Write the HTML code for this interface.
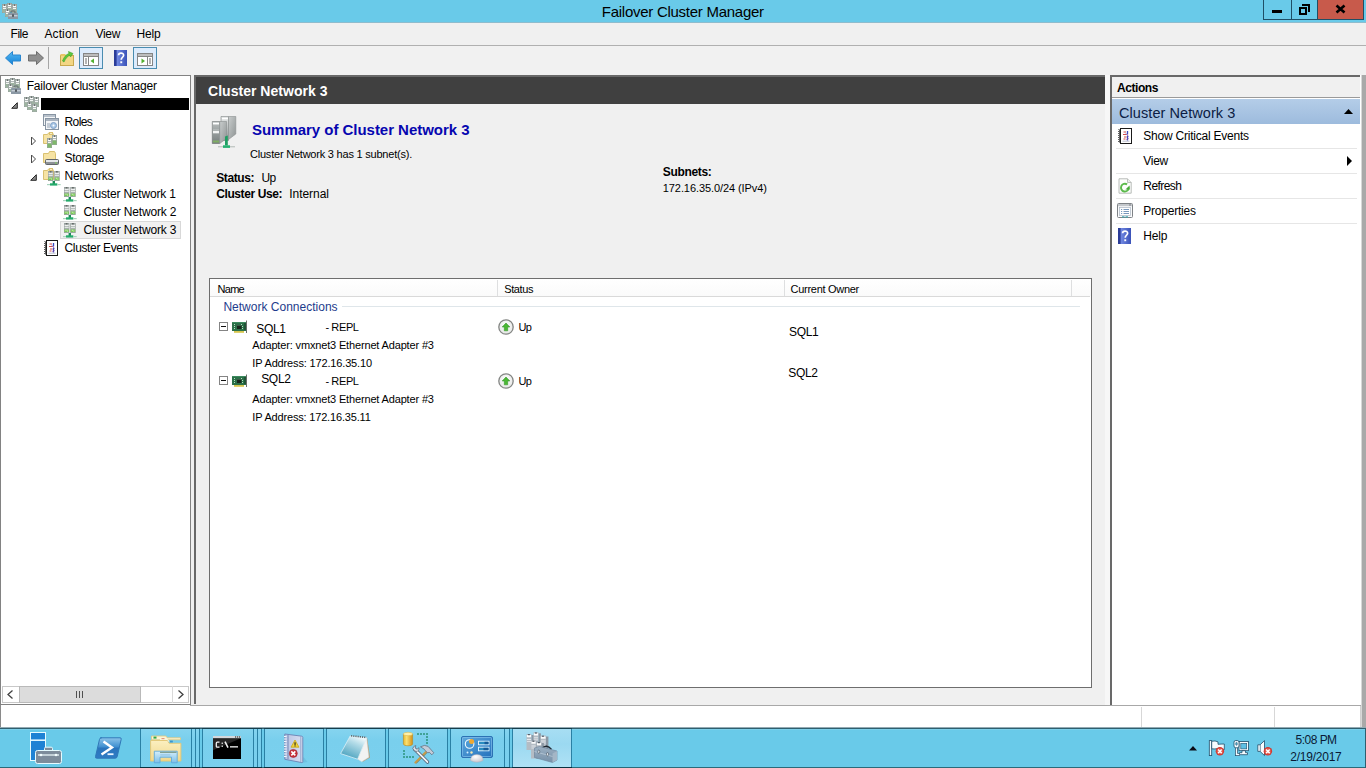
<!DOCTYPE html>
<html>
<head>
<meta charset="utf-8">
<title>Failover Cluster Manager</title>
<style>
*{box-sizing:border-box;margin:0;padding:0}
html,body{width:1366px;height:768px;overflow:hidden;background:#f0f0f0;font-family:"Liberation Sans",sans-serif;font-size:12px;color:#000}
.a,.x,svg{position:absolute}
.x{white-space:nowrap}
svg{overflow:visible}
.vl{position:absolute;top:728px;width:1px;height:39px;background:#2b7896}
.sep{position:absolute;left:1116px;width:241px;height:1px;background:#e6e6e6}
</style>
</head>
<body>
<div class="a" style="left:0px;top:0px;width:1366px;height:22px;background:#69cae9;"></div>
<div class="a" style="left:1263px;top:0px;width:29px;height:20px;background:#69cae9;border:1px solid #1f4f66;border-top:0"></div>
<div class="a" style="left:1291px;top:0px;width:27px;height:20px;background:#69cae9;border:1px solid #1f4f66;border-top:0"></div>
<div class="a" style="left:1317px;top:0px;width:47px;height:20px;background:#c85a4b;border:1px solid #1f4f66;border-top:0"></div>
<div class="a" style="left:1272px;top:10px;width:10px;height:3px;background:#000;"></div>
<svg style="left:1298px;top:3px" width="12" height="12"><path d="M4 2h7v7" fill="none" stroke="#000" stroke-width="2"/><rect x="2" y="5" width="6" height="6" fill="none" stroke="#000" stroke-width="2"/></svg>
<svg style="left:1335px;top:4px" width="11" height="10"><path d="M1.5 1.5L9.5 8.5M9.5 1.5L1.5 8.5" stroke="#000" stroke-width="2.6"/></svg>
<div class="a" style="left:0px;top:22px;width:1366px;height:23px;background:#f0f0f0;"></div>
<div class="a" style="left:0px;top:22px;width:1366px;height:1px;background:#8fbccd;"></div>
<div class="a" style="left:0px;top:45px;width:1366px;height:1px;background:#b0b0b0;"></div>
<div class="a" style="left:0px;top:46px;width:1366px;height:29px;background:#f1f1f1;"></div>
<div class="a" style="left:0px;top:75px;width:191px;height:630px;background:#fff;border:1px solid #828282"></div>
<div class="a" style="left:194px;top:75px;width:917px;height:630px;background:#f0f0f0;"></div>
<div class="a" style="left:194px;top:75px;width:912px;height:2px;background:#696969;"></div>
<div class="a" style="left:194px;top:75px;width:2px;height:629px;background:#696969;"></div>
<div class="a" style="left:196px;top:77px;width:909px;height:27px;background:#404040;"></div>
<div class="a" style="left:1105px;top:75px;width:5px;height:630px;background:#f7f7f7;"></div>
<div class="a" style="left:209px;top:278px;width:883px;height:410px;background:#fff;border:1px solid #6e6e6e"></div>
<div class="a" style="left:210px;top:279px;width:881px;height:17px;background:linear-gradient(#fff,#fafafa);"></div>
<div class="a" style="left:210px;top:296px;width:880px;height:1px;background:#d9d9d9;"></div>
<div class="a" style="left:497px;top:280px;width:1px;height:16px;background:#dedfe0;"></div>
<div class="a" style="left:784px;top:280px;width:1px;height:16px;background:#dedfe0;"></div>
<div class="a" style="left:1071px;top:280px;width:1px;height:16px;background:#dedfe0;"></div>
<div class="a" style="left:342px;top:306px;width:738px;height:1px;background:#dfe6ea;"></div>
<div class="a" style="left:1110px;top:75px;width:252px;height:630px;background:#fff;"></div>
<div class="a" style="left:1110px;top:75px;width:250px;height:2px;background:#696969;"></div>
<div class="a" style="left:1110px;top:75px;width:2px;height:630px;background:#696969;"></div>
<div class="a" style="left:1112px;top:77px;width:248px;height:20px;background:#f0f0f0;"></div>
<div class="a" style="left:1112px;top:97px;width:248px;height:1px;background:#9a9a9a;"></div>
<div class="a" style="left:1112px;top:99px;width:248px;height:25px;background:linear-gradient(#b4cde8,#9dbbdd);"></div>
<div class="sep" style="top:148px"></div>
<div class="sep" style="top:173px"></div>
<div class="sep" style="top:198px"></div>
<div class="sep" style="top:223px"></div>
<svg style="left:1344px;top:109px" width="9" height="5"><path d="M0 5L4.5 0L9 5z" fill="#000"/></svg>
<svg style="left:1347px;top:156px" width="6" height="10"><path d="M0 0L5 5L0 10z" fill="#000"/></svg>
<div class="a" style="left:0px;top:705px;width:1366px;height:22px;background:#fff;"></div>
<div class="a" style="left:190px;top:705px;width:1176px;height:1px;background:#a8a8a8;"></div>
<div class="a" style="left:1141px;top:707px;width:1px;height:20px;background:#d7d7d7;"></div>
<div class="a" style="left:1274px;top:707px;width:1px;height:20px;background:#d7d7d7;"></div>
<div class="a" style="left:1360px;top:706px;width:1px;height:21px;background:#d0d0d0;"></div>
<div class="a" style="left:1362px;top:75px;width:4px;height:652px;background:#a9a9a9;"></div>
<div class="a" style="left:1361px;top:75px;width:1px;height:652px;background:#d8d8d8;"></div>
<div class="a" style="left:0px;top:705px;width:1px;height:22px;background:#8a8a8a;"></div>
<div class="a" style="left:0px;top:727px;width:1366px;height:41px;background:#69cae9;"></div>
<div class="a" style="left:0px;top:729px;width:1366px;height:1px;background:#7ccfe9;"></div>
<div class="a" style="left:0px;top:727px;width:1366px;height:1px;background:#93aab3;"></div>
<div class="a" style="left:0px;top:728px;width:1366px;height:1px;background:#2f5f6f;"></div>
<div class="a" style="left:0px;top:767px;width:1366px;height:1px;background:#2a6a7a;"></div>
<div class="a" style="left:1365px;top:728px;width:1px;height:40px;background:#2f5f6f;"></div>
<div class="a" style="left:140px;top:728px;width:60px;height:40px;background:linear-gradient(#86d4ef,#79cfed 30%,#7ad0ee);"></div>
<div class="a" style="left:140px;top:728px;width:60px;height:1px;background:#163e4c;"></div>
<div class="a" style="left:140px;top:767px;width:60px;height:1px;background:#0a3240;"></div>
<div class="a" style="left:140px;top:729px;width:1px;height:38px;background:#2a80a4;"></div>
<div class="a" style="left:191px;top:729px;width:1px;height:38px;background:#2a80a4;"></div>
<div class="a" style="left:195px;top:729px;width:1px;height:38px;background:#2a80a4;"></div>
<div class="a" style="left:199px;top:729px;width:1px;height:38px;background:#2a80a4;"></div>
<div class="a" style="left:202px;top:728px;width:60px;height:40px;background:linear-gradient(#86d4ef,#79cfed 30%,#7ad0ee);"></div>
<div class="a" style="left:202px;top:728px;width:60px;height:1px;background:#163e4c;"></div>
<div class="a" style="left:202px;top:767px;width:60px;height:1px;background:#0a3240;"></div>
<div class="a" style="left:202px;top:729px;width:1px;height:38px;background:#2a80a4;"></div>
<div class="a" style="left:253px;top:729px;width:1px;height:38px;background:#2a80a4;"></div>
<div class="a" style="left:257px;top:729px;width:1px;height:38px;background:#2a80a4;"></div>
<div class="a" style="left:261px;top:729px;width:1px;height:38px;background:#2a80a4;"></div>
<div class="a" style="left:264px;top:728px;width:60px;height:40px;background:linear-gradient(#86d4ef,#79cfed 30%,#7ad0ee);"></div>
<div class="a" style="left:264px;top:728px;width:60px;height:1px;background:#163e4c;"></div>
<div class="a" style="left:264px;top:767px;width:60px;height:1px;background:#0a3240;"></div>
<div class="a" style="left:264px;top:729px;width:1px;height:38px;background:#2a80a4;"></div>
<div class="a" style="left:323px;top:729px;width:1px;height:38px;background:#2a80a4;"></div>
<div class="a" style="left:326px;top:728px;width:60px;height:40px;background:linear-gradient(#86d4ef,#79cfed 30%,#7ad0ee);"></div>
<div class="a" style="left:326px;top:728px;width:60px;height:1px;background:#163e4c;"></div>
<div class="a" style="left:326px;top:767px;width:60px;height:1px;background:#0a3240;"></div>
<div class="a" style="left:326px;top:729px;width:1px;height:38px;background:#2a80a4;"></div>
<div class="a" style="left:385px;top:729px;width:1px;height:38px;background:#2a80a4;"></div>
<div class="a" style="left:388px;top:728px;width:60px;height:40px;background:linear-gradient(#86d4ef,#79cfed 30%,#7ad0ee);"></div>
<div class="a" style="left:388px;top:728px;width:60px;height:1px;background:#163e4c;"></div>
<div class="a" style="left:388px;top:767px;width:60px;height:1px;background:#0a3240;"></div>
<div class="a" style="left:388px;top:729px;width:1px;height:38px;background:#2a80a4;"></div>
<div class="a" style="left:447px;top:729px;width:1px;height:38px;background:#2a80a4;"></div>
<div class="a" style="left:450px;top:728px;width:60px;height:40px;background:linear-gradient(#86d4ef,#79cfed 30%,#7ad0ee);"></div>
<div class="a" style="left:450px;top:728px;width:60px;height:1px;background:#163e4c;"></div>
<div class="a" style="left:450px;top:767px;width:60px;height:1px;background:#0a3240;"></div>
<div class="a" style="left:450px;top:729px;width:1px;height:38px;background:#2a80a4;"></div>
<div class="a" style="left:504px;top:729px;width:1px;height:38px;background:#2a80a4;"></div>
<div class="a" style="left:509px;top:729px;width:1px;height:38px;background:#2a80a4;"></div>
<div class="a" style="left:512px;top:728px;width:60px;height:40px;background:linear-gradient(#a8def3,#9bd9f1 40%,#b0e2f5);"></div>
<div class="a" style="left:512px;top:728px;width:60px;height:1px;background:#163e4c;"></div>
<div class="a" style="left:512px;top:767px;width:60px;height:1px;background:#0a3240;"></div>
<div class="a" style="left:512px;top:729px;width:1px;height:38px;background:#2a80a4;"></div>
<div class="a" style="left:571px;top:729px;width:1px;height:38px;background:#2a80a4;"></div>
<div class="a" style="left:60px;top:221px;width:121px;height:18px;background:#f1f1f1;border:1px solid #d8d8d8"></div>
<div class="a" style="left:41px;top:98px;width:148px;height:12px;background:#000;"></div>
<div class="a" style="left:2px;top:686px;width:187px;height:17px;background:#fff;border:1px solid #c8c8c8"></div>
<div class="a" style="left:19px;top:686px;width:122px;height:17px;background:#dcdcdc;border:1px solid #b9b9b9"></div>
<div class="a" style="left:172px;top:686px;width:1px;height:17px;background:#d9d9d9;"></div>
<svg style="left:7px;top:690px" width="7" height="9"><path d="M5.5 0.5L1 4.5L5.5 8.5" fill="none" stroke="#404040" stroke-width="1.3"/></svg>
<svg style="left:177px;top:690px" width="7" height="9"><path d="M1.5 0.5L6 4.5L1.5 8.5" fill="none" stroke="#404040" stroke-width="1.3"/></svg>
<div class="a" style="left:76px;top:691px;width:1px;height:7px;background:#505050;"></div>
<div class="a" style="left:79px;top:691px;width:1px;height:7px;background:#505050;"></div>
<div class="a" style="left:82px;top:691px;width:1px;height:7px;background:#505050;"></div>
<svg style="left:2px;top:3px" width="16" height="16"><rect x="0" y="1" width="5" height="9" fill="#8e9a94"/><rect x="0.5" y="1.5" width="4" height="8" fill="#b2bab8"/><rect x="0.5" y="6.0" width="4" height="3.5" fill="#9db4a0"/><rect x="1" y="3" width="3" height="1" fill="#fff"/><rect x="1" y="5" width="3" height="1" fill="#f2f5f3"/><rect x="2.0" y="1.6" width="1" height="1" fill="#3a3e3c"/><rect x="5" y="0" width="5" height="9" fill="#8e9a94"/><rect x="5.5" y="0.5" width="4" height="8" fill="#b2bab8"/><rect x="5.5" y="5.0" width="4" height="3.5" fill="#9db4a0"/><rect x="6" y="2" width="3" height="1" fill="#fff"/><rect x="6" y="4" width="3" height="1" fill="#f2f5f3"/><rect x="7.0" y="0.6" width="1" height="1" fill="#3a3e3c"/><rect x="10" y="1" width="5" height="9" fill="#8e9a94"/><rect x="10.5" y="1.5" width="4" height="8" fill="#b2bab8"/><rect x="10.5" y="6.0" width="4" height="3.5" fill="#9db4a0"/><rect x="11" y="3" width="3" height="1" fill="#fff"/><rect x="11" y="5" width="3" height="1" fill="#f2f5f3"/><rect x="12.0" y="1.6" width="1" height="1" fill="#3a3e3c"/><rect x="3" y="6" width="5" height="8" fill="#8e9a94"/><rect x="3.5" y="6.5" width="4" height="7" fill="#b2bab8"/><rect x="3.5" y="10.4" width="4" height="3.1" fill="#9db4a0"/><rect x="4" y="8" width="3" height="1" fill="#fff"/><rect x="4" y="10" width="3" height="1" fill="#f2f5f3"/><rect x="5.0" y="6.6" width="1" height="1" fill="#3a3e3c"/><path d="M9 10.5v-1.8q0 -.7 .7 -.7h2.5999999999999996q.7 0 .7 .7v1.8" fill="none" stroke="#5a6268" stroke-width="1"/><rect x="6" y="10" width="10" height="6" rx=".6" fill="#8b98a4"/><rect x="6.5" y="12" width="9" height="1.4" fill="#c6ced6"/><rect x="10.2" y="11.4" width="1.6" height="2.4" fill="#3c4248"/></svg>
<svg style="left:5px;top:78px" width="16" height="16"><rect x="0" y="1" width="5" height="9" fill="#8e9a94"/><rect x="0.5" y="1.5" width="4" height="8" fill="#b2bab8"/><rect x="0.5" y="6.0" width="4" height="3.5" fill="#9db4a0"/><rect x="1" y="3" width="3" height="1" fill="#fff"/><rect x="1" y="5" width="3" height="1" fill="#f2f5f3"/><rect x="2.0" y="1.6" width="1" height="1" fill="#3a3e3c"/><rect x="5" y="0" width="5" height="9" fill="#8e9a94"/><rect x="5.5" y="0.5" width="4" height="8" fill="#b2bab8"/><rect x="5.5" y="5.0" width="4" height="3.5" fill="#9db4a0"/><rect x="6" y="2" width="3" height="1" fill="#fff"/><rect x="6" y="4" width="3" height="1" fill="#f2f5f3"/><rect x="7.0" y="0.6" width="1" height="1" fill="#3a3e3c"/><rect x="10" y="1" width="5" height="9" fill="#8e9a94"/><rect x="10.5" y="1.5" width="4" height="8" fill="#b2bab8"/><rect x="10.5" y="6.0" width="4" height="3.5" fill="#9db4a0"/><rect x="11" y="3" width="3" height="1" fill="#fff"/><rect x="11" y="5" width="3" height="1" fill="#f2f5f3"/><rect x="12.0" y="1.6" width="1" height="1" fill="#3a3e3c"/><rect x="3" y="6" width="5" height="8" fill="#8e9a94"/><rect x="3.5" y="6.5" width="4" height="7" fill="#b2bab8"/><rect x="3.5" y="10.4" width="4" height="3.1" fill="#9db4a0"/><rect x="4" y="8" width="3" height="1" fill="#fff"/><rect x="4" y="10" width="3" height="1" fill="#f2f5f3"/><rect x="5.0" y="6.6" width="1" height="1" fill="#3a3e3c"/><path d="M9 10.5v-1.8q0 -.7 .7 -.7h2.5999999999999996q.7 0 .7 .7v1.8" fill="none" stroke="#5a6268" stroke-width="1"/><rect x="6" y="10" width="10" height="6" rx=".6" fill="#8b98a4"/><rect x="6.5" y="12" width="9" height="1.4" fill="#c6ced6"/><rect x="10.2" y="11.4" width="1.6" height="2.4" fill="#3c4248"/></svg>
<svg style="left:24px;top:96px" width="16" height="16"><rect x="0" y="1" width="5" height="10" fill="#8e9a94"/><rect x="0.5" y="1.5" width="4" height="9" fill="#b2bab8"/><rect x="0.5" y="6.5" width="4" height="4.0" fill="#9db4a0"/><rect x="1" y="3" width="3" height="1" fill="#fff"/><rect x="1" y="5" width="3" height="1" fill="#f2f5f3"/><rect x="2.0" y="1.6" width="1" height="1" fill="#3a3e3c"/><rect x="5" y="0" width="5" height="10" fill="#8e9a94"/><rect x="5.5" y="0.5" width="4" height="9" fill="#b2bab8"/><rect x="5.5" y="5.5" width="4" height="4.0" fill="#9db4a0"/><rect x="6" y="2" width="3" height="1" fill="#fff"/><rect x="6" y="4" width="3" height="1" fill="#f2f5f3"/><rect x="7.0" y="0.6" width="1" height="1" fill="#3a3e3c"/><rect x="10" y="1" width="5" height="10" fill="#8e9a94"/><rect x="10.5" y="1.5" width="4" height="9" fill="#b2bab8"/><rect x="10.5" y="6.5" width="4" height="4.0" fill="#9db4a0"/><rect x="11" y="3" width="3" height="1" fill="#fff"/><rect x="11" y="5" width="3" height="1" fill="#f2f5f3"/><rect x="12.0" y="1.6" width="1" height="1" fill="#3a3e3c"/><rect x="3" y="6" width="5" height="8" fill="#8e9a94"/><rect x="3.5" y="6.5" width="4" height="7" fill="#b2bab8"/><rect x="3.5" y="10.4" width="4" height="3.1" fill="#9db4a0"/><rect x="4" y="8" width="3" height="1" fill="#fff"/><rect x="4" y="10" width="3" height="1" fill="#f2f5f3"/><rect x="5.0" y="6.6" width="1" height="1" fill="#3a3e3c"/><rect x="8" y="8" width="5" height="8" fill="#8e9a94"/><rect x="8.5" y="8.5" width="4" height="7" fill="#b2bab8"/><rect x="8.5" y="12.4" width="4" height="3.1" fill="#9db4a0"/><rect x="9" y="10" width="3" height="1" fill="#fff"/><rect x="9" y="12" width="3" height="1" fill="#f2f5f3"/><rect x="10.0" y="8.6" width="1" height="1" fill="#3a3e3c"/></svg>
<svg style="left:43px;top:114px" width="16" height="16"><rect x="0.5" y="0.5" width="12" height="11" fill="#f4f6f8" stroke="#8794a2"/><rect x="1" y="1" width="11" height="2" fill="#b9c2cc"/><rect x="2.5" y="4.5" width="13" height="11" fill="#f4f6f8" stroke="#8794a2"/><rect x="3" y="5" width="12" height="2" fill="#aab4c0"/><rect x="4" y="9" width="3" height="5" fill="#c4ccd6"/><circle cx="10.5" cy="11.5" r="3" fill="#a9c7e6" stroke="#7f9fc4"/><circle cx="10.5" cy="11.5" r="1" fill="#fff"/></svg>
<svg style="left:43px;top:132px" width="16" height="16"><path d="M0.5 2.5h4l1 -1.5h4l1 1.5v9h-10z" fill="#f6e3a4" stroke="#d9c171"/><rect x="6.5" y="0.5" width="3" height="2" fill="#fbf0c8" stroke="#d9c171"/><rect x="4" y="6" width="5" height="10" fill="#8e9a94"/><rect x="4.5" y="6.5" width="4" height="9" fill="#b4bab6"/><rect x="4.5" y="11.5" width="4" height="4.0" fill="#7fb86a"/><rect x="5" y="8" width="3" height="1" fill="#fff"/><rect x="5" y="10" width="3" height="1" fill="#f2f5f3"/><rect x="6.0" y="6.6" width="1" height="1" fill="#3a3e3c"/><rect x="9" y="3" width="5" height="10" fill="#8e9a94"/><rect x="9.5" y="3.5" width="4" height="9" fill="#b4bab6"/><rect x="9.5" y="8.5" width="4" height="4.0" fill="#7fb86a"/><rect x="10" y="5" width="3" height="1" fill="#fff"/><rect x="10" y="7" width="3" height="1" fill="#f2f5f3"/><rect x="11.0" y="3.6" width="1" height="1" fill="#3a3e3c"/></svg>
<svg style="left:43px;top:150px" width="16" height="16"><path d="M0.5 3.5h5l1 -2h5l1 2v9h-12z" fill="#f6e3a4" stroke="#d9c171"/><rect x="2.5" y="9.5" width="13" height="5" rx="1" fill="#8e9296" stroke="#62666a"/><rect x="3" y="10" width="12" height="2" fill="#e6e8ea"/><rect x="12" y="12.5" width="2" height="1" fill="#7fd05a"/></svg>
<svg style="left:43px;top:168px" width="16" height="16"><path d="M0.5 2.5h4l1 -1.5h4l1 1.5v9h-10z" fill="#f6e3a4" stroke="#d9c171"/><rect x="6.5" y="0.5" width="3" height="2" fill="#fbf0c8" stroke="#d9c171"/><rect x="5" y="3" width="5.300" height="10" fill="#8f9896"/><rect x="5.4" y="3.4" width="4.500" height="9.200" fill="#aab2b0"/><rect x="6.7" y="3.5" width="1.800" height=".9" fill="#2c302e"/><rect x="5.6" y="4.8" width="4.100" height="1" fill="#fff"/><rect x="5.6" y="6.8" width="4.100" height="1" fill="#f0f3f1"/><rect x="5.4" y="9.5" width="4.500" height="2.600" fill="#7cc858"/><rect x="6.5" y="9.8" width="1" height="1" fill="#d8f4c8"/><rect x="8" y="10.5" width="1" height="1" fill="#d8f4c8"/><rect x="11.3" y="3" width="5.300" height="10" fill="#8f9896"/><rect x="11.700000000000001" y="3.4" width="4.500" height="9.200" fill="#aab2b0"/><rect x="13.0" y="3.5" width="1.800" height=".9" fill="#2c302e"/><rect x="11.9" y="4.8" width="4.100" height="1" fill="#fff"/><rect x="11.9" y="6.8" width="4.100" height="1" fill="#f0f3f1"/><rect x="11.700000000000001" y="9.5" width="4.500" height="2.600" fill="#7cc858"/><rect x="12.8" y="9.8" width="1" height="1" fill="#d8f4c8"/><rect x="14.3" y="10.5" width="1" height="1" fill="#d8f4c8"/><rect x="9.6" y="13" width="2.400" height="3" fill="#1c8a58"/><rect x="7" y="15.3" width="7.300" height="2.300" fill="#24aa6a"/><rect x="4" y="16" width="3" height="1.200" fill="#a8d4be"/><rect x="14.3" y="16" width="3.400" height="1.200" fill="#a8d4be"/></svg>
<svg style="left:63px;top:187px" width="14" height="15"><rect x="1" y="0" width="5.300" height="10" fill="#8f9896"/><rect x="1.4" y="0.4" width="4.500" height="9.200" fill="#aab2b0"/><rect x="2.7" y="0.5" width="1.800" height=".9" fill="#2c302e"/><rect x="1.6" y="1.8" width="4.100" height="1" fill="#fff"/><rect x="1.6" y="3.8" width="4.100" height="1" fill="#f0f3f1"/><rect x="1.4" y="6.5" width="4.500" height="2.600" fill="#7cc858"/><rect x="2.5" y="6.8" width="1" height="1" fill="#d8f4c8"/><rect x="4" y="7.5" width="1" height="1" fill="#d8f4c8"/><rect x="7.3" y="0" width="5.300" height="10" fill="#8f9896"/><rect x="7.7" y="0.4" width="4.500" height="9.200" fill="#aab2b0"/><rect x="9.0" y="0.5" width="1.800" height=".9" fill="#2c302e"/><rect x="7.8999999999999995" y="1.8" width="4.100" height="1" fill="#fff"/><rect x="7.8999999999999995" y="3.8" width="4.100" height="1" fill="#f0f3f1"/><rect x="7.7" y="6.5" width="4.500" height="2.600" fill="#7cc858"/><rect x="8.8" y="6.8" width="1" height="1" fill="#d8f4c8"/><rect x="10.3" y="7.5" width="1" height="1" fill="#d8f4c8"/><rect x="5.6" y="10" width="2.400" height="3" fill="#1c8a58"/><rect x="3" y="12.3" width="7.300" height="2.300" fill="#24aa6a"/><rect x="0" y="13" width="3" height="1.200" fill="#a8d4be"/><rect x="10.3" y="13" width="3.400" height="1.200" fill="#a8d4be"/></svg>
<svg style="left:63px;top:205px" width="14" height="15"><rect x="1" y="0" width="5.300" height="10" fill="#8f9896"/><rect x="1.4" y="0.4" width="4.500" height="9.200" fill="#aab2b0"/><rect x="2.7" y="0.5" width="1.800" height=".9" fill="#2c302e"/><rect x="1.6" y="1.8" width="4.100" height="1" fill="#fff"/><rect x="1.6" y="3.8" width="4.100" height="1" fill="#f0f3f1"/><rect x="1.4" y="6.5" width="4.500" height="2.600" fill="#7cc858"/><rect x="2.5" y="6.8" width="1" height="1" fill="#d8f4c8"/><rect x="4" y="7.5" width="1" height="1" fill="#d8f4c8"/><rect x="7.3" y="0" width="5.300" height="10" fill="#8f9896"/><rect x="7.7" y="0.4" width="4.500" height="9.200" fill="#aab2b0"/><rect x="9.0" y="0.5" width="1.800" height=".9" fill="#2c302e"/><rect x="7.8999999999999995" y="1.8" width="4.100" height="1" fill="#fff"/><rect x="7.8999999999999995" y="3.8" width="4.100" height="1" fill="#f0f3f1"/><rect x="7.7" y="6.5" width="4.500" height="2.600" fill="#7cc858"/><rect x="8.8" y="6.8" width="1" height="1" fill="#d8f4c8"/><rect x="10.3" y="7.5" width="1" height="1" fill="#d8f4c8"/><rect x="5.6" y="10" width="2.400" height="3" fill="#1c8a58"/><rect x="3" y="12.3" width="7.300" height="2.300" fill="#24aa6a"/><rect x="0" y="13" width="3" height="1.200" fill="#a8d4be"/><rect x="10.3" y="13" width="3.400" height="1.200" fill="#a8d4be"/></svg>
<svg style="left:63px;top:223px" width="14" height="15"><rect x="1" y="0" width="5.300" height="10" fill="#8f9896"/><rect x="1.4" y="0.4" width="4.500" height="9.200" fill="#aab2b0"/><rect x="2.7" y="0.5" width="1.800" height=".9" fill="#2c302e"/><rect x="1.6" y="1.8" width="4.100" height="1" fill="#fff"/><rect x="1.6" y="3.8" width="4.100" height="1" fill="#f0f3f1"/><rect x="1.4" y="6.5" width="4.500" height="2.600" fill="#7cc858"/><rect x="2.5" y="6.8" width="1" height="1" fill="#d8f4c8"/><rect x="4" y="7.5" width="1" height="1" fill="#d8f4c8"/><rect x="7.3" y="0" width="5.300" height="10" fill="#8f9896"/><rect x="7.7" y="0.4" width="4.500" height="9.200" fill="#aab2b0"/><rect x="9.0" y="0.5" width="1.800" height=".9" fill="#2c302e"/><rect x="7.8999999999999995" y="1.8" width="4.100" height="1" fill="#fff"/><rect x="7.8999999999999995" y="3.8" width="4.100" height="1" fill="#f0f3f1"/><rect x="7.7" y="6.5" width="4.500" height="2.600" fill="#7cc858"/><rect x="8.8" y="6.8" width="1" height="1" fill="#d8f4c8"/><rect x="10.3" y="7.5" width="1" height="1" fill="#d8f4c8"/><rect x="5.6" y="10" width="2.400" height="3" fill="#1c8a58"/><rect x="3" y="12.3" width="7.300" height="2.300" fill="#24aa6a"/><rect x="0" y="13" width="3" height="1.200" fill="#a8d4be"/><rect x="10.3" y="13" width="3.400" height="1.200" fill="#a8d4be"/></svg>
<svg style="left:44px;top:240px" width="14" height="16"><rect x="2.500" y="0.500" width="11" height="15" fill="#fff" stroke="#1a1a1a" stroke-width="1"/><path d="M0.500 1.500l2 1l-2 1l2 1l-2 1l2 1l-2 1l2 1l-2 1l2 1l-2 1l2 1l-2 1l2 1" fill="none" stroke="#1a1a1a" stroke-width=".9"/><path d="M5.500 4h2.500M5 6.500h3.500M6 9h2.500M5.500 11h2" stroke="#d04a4a" stroke-width="1.100"/><path d="M9.500 3v3.500M9.500 8v4.500" stroke="#3848c4" stroke-width="1.300"/><path d="M8 5.500l2.500 3M10.500 10l-2 2" stroke="#8a4aa0" stroke-width=".9"/><path d="M4.500 13.200h7" stroke="#a0a4b8" stroke-width=".7"/></svg>
<svg style="left:10.5px;top:101.5px" width="7" height="7"><path d="M6.300 0.700v5.600h-5.600z" fill="#8a8a8a" stroke="#262626" stroke-width="1" stroke-linejoin="round"/></svg>
<svg style="left:29.5px;top:173.5px" width="7" height="7"><path d="M6.300 0.700v5.600h-5.600z" fill="#8a8a8a" stroke="#262626" stroke-width="1" stroke-linejoin="round"/></svg>
<svg style="left:31px;top:136px" width="6" height="10"><path d="M0.5 1L4.5 5L0.5 9z" fill="#fff" stroke="#4a4a4a" stroke-width="1"/></svg>
<svg style="left:31px;top:154px" width="6" height="10"><path d="M0.5 1L4.5 5L0.5 9z" fill="#fff" stroke="#4a4a4a" stroke-width="1"/></svg>
<svg style="left:5px;top:51px" width="16" height="14"><defs><linearGradient id="gb" x1="0" y1="0" x2="0" y2="1"><stop offset="0" stop-color="#55b8f2"/><stop offset="1" stop-color="#1583d8"/></linearGradient></defs><path d="M0.5 7L7.5 0.5V4h8v6h-8v3.5z" fill="url(#gb)" stroke="#2a86cf" stroke-width="1"/></svg>
<svg style="left:28px;top:51px" width="16" height="14"><path d="M15.5 7L8.5 0.5V4h-8v6h8v3.5z" fill="#8f8f8f" stroke="#6e6e6e" stroke-width="1"/></svg>
<div class="a" style="left:48px;top:47px;width:1px;height:22px;background:#a6a6a6;"></div>
<svg style="left:60px;top:51px" width="14" height="15"><rect x="0.5" y="4.5" width="13" height="10" fill="#f3d684" stroke="#c9a94e"/><rect x="0.5" y="3" width="5" height="2" fill="#e9c665"/><path d="M2.5 10C4 6 6 3.5 9 2.5L8.5 0.5L13 2.5L10.5 6L10 4.2C7.5 5 5.5 7.5 4 11z" fill="#5cc83c" stroke="#3e9e28" stroke-width=".6"/></svg>
<div class="a" style="left:79px;top:47px;width:24px;height:22px;background:#dcebfc;border:1px solid #4a8cb0"></div><svg style="left:83px;top:53px" width="16" height="13"><rect x="0.5" y="0.5" width="15" height="12" fill="#fff" stroke="#858585"/><rect x="1" y="1" width="14" height="2" fill="#bdbdbd"/><path d="M1 3.5h14" stroke="#858585"/><path d="M5.5 4v8" stroke="#858585"/><path d="M2 6h2M2 8h2M2 10h2" stroke="#6a6a6a"/><path d="M11 5.5v5L7.5 8z" fill="#52b030"/></svg>
<div class="a" style="left:133px;top:47px;width:24px;height:22px;background:#dcebfc;border:1px solid #4a8cb0"></div><svg style="left:137px;top:53px" width="16" height="13"><rect x="0.5" y="0.5" width="15" height="12" fill="#fff" stroke="#858585"/><rect x="1" y="1" width="14" height="2" fill="#bdbdbd"/><path d="M1 3.5h14" stroke="#858585"/><path d="M10.5 4v8" stroke="#858585"/><path d="M12 6h2M12 8h2M12 10h2" stroke="#6a6a6a"/><path d="M4.5 5.5v5L8 8z" fill="#52b030"/></svg>
<svg style="left:114px;top:50px" width="13" height="16"><defs><linearGradient id="GHID" x1="0" y1="0" x2="1" y2="0"><stop offset="0" stop-color="#2a3ea0"/><stop offset="0.25" stop-color="#6f86e0"/><stop offset="1" stop-color="#3a52b8"/></linearGradient></defs><rect x="0" y="0" width="13" height="16" fill="url(#GHID)"/><rect x="0" y="0" width="2.5" height="16" fill="#2b3c98"/><path d="M4.6 5.2C4.6 2.6 9.6 2.4 9.6 5.2C9.6 7.2 7.2 7.4 7.2 9.8" fill="none" stroke="#fff" stroke-width="1.7"/><rect x="6.3" y="11.3" width="1.9" height="1.9" fill="#fff"/></svg>
<svg style="left:212px;top:116px" width="24" height="32"><defs><linearGradient id="gs" x1="0" y1="0" x2="1" y2="1"><stop offset="0" stop-color="#c9cdcd"/><stop offset="1" stop-color="#8f9494"/></linearGradient><linearGradient id="gf2" x1="0" y1="0" x2="0" y2="1"><stop offset="0" stop-color="#d4d8d8"/><stop offset="1" stop-color="#767e7e"/></linearGradient><linearGradient id="gf" x1="0" y1="0" x2="0" y2="1"><stop offset="0" stop-color="#e8eaea"/><stop offset="1" stop-color="#8c9292"/></linearGradient></defs><path d="M9 0.5h7.5v24h-7.5z" fill="url(#gf)" stroke="#7d8383" stroke-width=".6"/><path d="M16.5 0.5h7.3v17.5l-7.3 5.5z" fill="url(#gs)" stroke="#8a8f8f" stroke-width=".6"/><path d="M0.3 5.5h7.4v22h-7.4z" fill="url(#gf2)" stroke="#666c6c" stroke-width=".6"/><path d="M1 10h6M1 12h6M1 19h6M1 21h6M1 23h6" stroke="#7a8080" stroke-width=".6"/><path d="M7.7 5.5h6.8v17l-6.8 5z" fill="url(#gs)" stroke="#8a8f8f" stroke-width=".6"/><rect x="1" y="7" width="6" height="1.2" fill="#fff"/><rect x="1" y="15" width="6" height="2.2" fill="#f2f4f4"/><rect x="10" y="2" width="6" height="1.2" fill="#fff"/><rect x="1" y="24.5" width="6" height="2" fill="#7fae62"/><path d="M13 20.5l2.8 -1v10h-2.8z" fill="#1f9e62"/><rect x="11" y="29.3" width="7" height="2.6" fill="#25b070"/><rect x="6" y="30" width="5" height="1.4" fill="#c3c9c6"/><rect x="18" y="30" width="5" height="1.4" fill="#c3c9c6"/></svg>
<div class="a" style="left:219px;top:322px;width:9px;height:9px;background:#fff;border:1px solid #848484"></div><div class="a" style="left:221px;top:326px;width:5px;height:1px;background:#101010;"></div>
<svg style="left:232px;top:321px" width="15" height="12"><rect x="0" y="1" width="14" height="9" fill="#2b7048"/><rect x="0" y="1" width="14" height="1" fill="#3c8a5e"/><rect x="5" y="5" width="4.500" height="3" fill="#18261c"/><rect x="4.500" y="4" width="5.500" height="1" fill="#3a5a46"/><rect x="2" y="3" width="1" height="1" fill="#b4e6c2"/><rect x="2" y="5" width="1" height="1" fill="#b4e6c2"/><rect x="2" y="7" width="1" height="1" fill="#b4e6c2"/><rect x="9" y="3" width="1" height="1" fill="#b4e6c2"/><rect x="10" y="5" width="1" height="1" fill="#b4e6c2"/><rect x="10" y="7" width="1" height="1" fill="#b4e6c2"/><rect x="12" y="2" width="2" height="7" fill="#1f5436"/><rect x="2" y="10" width="10" height="1.800" fill="#d6c64e"/><rect x="14" y="-0.500" width="1" height="12.500" fill="#6a6e6a"/></svg>
<svg style="left:498px;top:319px" width="16" height="16"><defs><radialGradient id="gu" cx=".5" cy=".4" r=".6"><stop offset="0" stop-color="#fff"/><stop offset="1" stop-color="#e4e6e4"/></radialGradient></defs><circle cx="8" cy="8" r="7.2" fill="url(#gu)" stroke="#848684" stroke-width="1.3"/><path d="M8 4L11.800 8H9.700v3.800H6.300V8H4.200z" fill="#4ab834" stroke="#36962a" stroke-width=".6" stroke-linejoin="round"/></svg>
<div class="a" style="left:219px;top:376px;width:9px;height:9px;background:#fff;border:1px solid #848484"></div><div class="a" style="left:221px;top:380px;width:5px;height:1px;background:#101010;"></div>
<svg style="left:232px;top:375px" width="15" height="12"><rect x="0" y="1" width="14" height="9" fill="#2b7048"/><rect x="0" y="1" width="14" height="1" fill="#3c8a5e"/><rect x="5" y="5" width="4.500" height="3" fill="#18261c"/><rect x="4.500" y="4" width="5.500" height="1" fill="#3a5a46"/><rect x="2" y="3" width="1" height="1" fill="#b4e6c2"/><rect x="2" y="5" width="1" height="1" fill="#b4e6c2"/><rect x="2" y="7" width="1" height="1" fill="#b4e6c2"/><rect x="9" y="3" width="1" height="1" fill="#b4e6c2"/><rect x="10" y="5" width="1" height="1" fill="#b4e6c2"/><rect x="10" y="7" width="1" height="1" fill="#b4e6c2"/><rect x="12" y="2" width="2" height="7" fill="#1f5436"/><rect x="2" y="10" width="10" height="1.800" fill="#d6c64e"/><rect x="14" y="-0.500" width="1" height="12.500" fill="#6a6e6a"/></svg>
<svg style="left:498px;top:373px" width="16" height="16"><defs><radialGradient id="gu" cx=".5" cy=".4" r=".6"><stop offset="0" stop-color="#fff"/><stop offset="1" stop-color="#e4e6e4"/></radialGradient></defs><circle cx="8" cy="8" r="7.2" fill="url(#gu)" stroke="#848684" stroke-width="1.3"/><path d="M8 4L11.800 8H9.700v3.800H6.300V8H4.200z" fill="#4ab834" stroke="#36962a" stroke-width=".6" stroke-linejoin="round"/></svg>
<svg style="left:1118px;top:128px" width="14" height="16"><rect x="2.500" y="0.500" width="11" height="15" fill="#fff" stroke="#1a1a1a" stroke-width="1"/><path d="M0.500 1.500l2 1l-2 1l2 1l-2 1l2 1l-2 1l2 1l-2 1l2 1l-2 1l2 1l-2 1l2 1" fill="none" stroke="#1a1a1a" stroke-width=".9"/><path d="M5.500 4h2.500M5 6.500h3.500M6 9h2.500M5.500 11h2" stroke="#d04a4a" stroke-width="1.100"/><path d="M9.500 3v3.500M9.500 8v4.500" stroke="#3848c4" stroke-width="1.300"/><path d="M8 5.500l2.500 3M10.500 10l-2 2" stroke="#8a4aa0" stroke-width=".9"/><path d="M4.500 13.200h7" stroke="#a0a4b8" stroke-width=".7"/></svg>
<svg style="left:1118px;top:178px" width="14" height="16"><path d="M1 0.800h8.500l3.700 3.700v10.700h-12.200z" fill="#fdfefd" stroke="#b0b4b0" stroke-width=".9"/><path d="M9.500 0.800v3.700h3.700" fill="#eceeec" stroke="#b0b4b0" stroke-width=".8"/><path d="M10.800 9.600a3.900 3.900 0 1 1 -1.700 -3.200" fill="none" stroke="#5cba4c" stroke-width="1.900"/><path d="M11.600 7.400v4.200h-4.200z" fill="#48a83a"/></svg>
<svg style="left:1117px;top:203px" width="16" height="16"><rect x="0.500" y="0.500" width="15" height="14" rx="1" fill="#fafbfc" stroke="#7e8286"/><rect x="1" y="1" width="14" height="2.200" fill="#c4c8cc"/><rect x="12" y="1.400" width="2" height="1.200" fill="#8a8e92"/><rect x="2.500" y="4.500" width="11" height="8" fill="#fff" stroke="#a8b4c0" stroke-width=".7"/><path d="M4 6.500h1.200M6.500 6.500h5.500M4 8.500h1.200M6.500 8.500h5.500M4 10.500h1.200M6.500 10.500h5.500" stroke="#6a8cb4" stroke-width=".9"/><rect x="5" y="13.300" width="2.500" height="1.200" fill="#3aa4ae"/><rect x="8.500" y="13.300" width="2.500" height="1.200" fill="#3aa4ae"/></svg>
<svg style="left:1118px;top:228px" width="13" height="16"><defs><linearGradient id="GHID2" x1="0" y1="0" x2="1" y2="0"><stop offset="0" stop-color="#2a3ea0"/><stop offset="0.25" stop-color="#6f86e0"/><stop offset="1" stop-color="#3a52b8"/></linearGradient></defs><rect x="0" y="0" width="13" height="16" fill="url(#GHID2)"/><rect x="0" y="0" width="2.5" height="16" fill="#2b3c98"/><path d="M4.6 5.2C4.6 2.6 9.6 2.4 9.6 5.2C9.6 7.2 7.2 7.4 7.2 9.8" fill="none" stroke="#fff" stroke-width="1.7"/><rect x="6.3" y="11.3" width="1.9" height="1.9" fill="#fff"/></svg>
<svg style="left:30px;top:732px" width="32" height="32"><rect x="0.5" y="0.5" width="15" height="28" fill="#1e82d4" stroke="#e6fbff"/><rect x="1" y="7.4" width="14" height="1.6" fill="#dff6ff"/><path d="M14.5 18.5v-2q0 -1.3 1.3 -1.3h5.4q1.3 0 1.3 1.3v2" fill="#7d8c9b" stroke="#e6fbff"/><rect x="5.5" y="18.5" width="26" height="13" rx="2" fill="#7d8c9b" stroke="#e6fbff"/><path d="M8 23h21" stroke="#f2fdff" stroke-width="1.2"/><circle cx="11" cy="23" r="1.3" fill="#f2fdff"/><circle cx="26" cy="23" r="1.3" fill="#f2fdff"/></svg>
<svg style="left:95px;top:737px" width="27" height="22"><defs><linearGradient id="gps" x1="0" y1="0" x2="0" y2="1"><stop offset="0" stop-color="#8cc4ea"/><stop offset=".45" stop-color="#3f8fd0"/><stop offset=".5" stop-color="#2a74bc"/><stop offset="1" stop-color="#2f7cc4"/></linearGradient></defs><path d="M5.5 0.8h19.5q1.6 0 1.2 1.6l-4 17.2q-.4 1.6 -2 1.6h-18.5q-1.6 0 -1.2 -1.6l4 -17.2q.4 -1.6 2 -1.6z" fill="url(#gps)" stroke="#2f78b8" stroke-width="1"/><path d="M8.5 4.5l8.5 6l-10.5 7" fill="none" stroke="#fff" stroke-width="2.4" stroke-linejoin="miter"/><rect x="12.5" y="16.3" width="6" height="1.8" fill="#e8f4ff"/></svg>
<svg style="left:150px;top:735px" width="32" height="29"><defs><linearGradient id="gfo" x1="0" y1="0" x2="0" y2="1"><stop offset="0" stop-color="#fbefc0"/><stop offset="1" stop-color="#f1d88c"/></linearGradient><linearGradient id="gst" x1="0" y1="0" x2="0" y2="1"><stop offset="0" stop-color="#d4eefb"/><stop offset="1" stop-color="#7cbfe8"/></linearGradient></defs><path d="M1.5 1h14.5l1.2 1.8h13.3v2h-29z" fill="#fbf3d4" stroke="#e4c878" stroke-width=".8"/><rect x="3.5" y="1.6" width="3" height="2" fill="#2fa84a"/><rect x="11.5" y="3.4" width="3" height="2" fill="#d0482c"/><rect x="19.8" y="5.6" width="3" height="2" fill="#3a96d0"/><path d="M0.6 5.5h17l1.5 2.8h11.8v17.7h-30.3z" fill="url(#gfo)" stroke="#e6c670" stroke-width=".9"/><path d="M10 4.4h7.6l1.4 2.4" fill="none" stroke="#fdf8e4" stroke-width="1"/><path d="M4.3 16.2h22.9v11.6h-5.7v-5.6h-11.5v5.6h-5.7z" fill="url(#gst)" stroke="#5ea9dc" stroke-width=".9"/><rect x="10" y="16.7" width="16.5" height="1.2" fill="#7a9a88"/><rect x="10.3" y="19.4" width="10" height="1" fill="#8fc0e0"/></svg>
<svg style="left:213px;top:736px" width="28" height="23"><rect x="0" y="0" width="28" height="23" fill="#000"/><path d="M0 2.200h28l-28 12z" fill="#262626"/><rect x="0" y="0" width="28" height="2.2" fill="#d4d8dc"/><rect x="22" y="0.4" width="1.2" height="1.2" fill="#333"/><rect x="24" y="0.4" width="1.2" height="1.2" fill="#333"/><rect x="26" y="0.4" width="1.2" height="1.2" fill="#333"/><path d="M6.5 6.2h-2.2q-1 0 -1 1v3q0 1 1 1h2.2" fill="none" stroke="#f2f2f2" stroke-width="1.3"/><rect x="8.6" y="6.6" width="1.3" height="1.3" fill="#f2f2f2"/><rect x="8.6" y="9.6" width="1.3" height="1.3" fill="#f2f2f2"/><path d="M12 5.6l3 6" stroke="#f2f2f2" stroke-width="1.5"/><rect x="17" y="10.2" width="8" height="1.3" fill="#f2f2f2"/></svg>
<svg style="left:283px;top:733px" width="28" height="31"><defs><linearGradient id="gev" x1="0" y1="0" x2="1" y2="0"><stop offset="0" stop-color="#b8c4e4"/><stop offset="1" stop-color="#d9def0"/></linearGradient></defs><path d="M20.500 24l4 5l-6 1z" fill="#58a8cc" opacity=".35"/><path d="M1.8 1l17 2.2q1 .2 1 1.2v24.4q0 1 -1 .8l-17 -3.300z" fill="url(#gev)" stroke="#6c82b4" stroke-width=".9"/><path d="M5 1.6v24.600" stroke="#7488b8" stroke-width="1"/><path d="M17.800 3.300v26" stroke="#8898c4" stroke-width=".8"/><path d="M1 3.500h2.600M1 6h2.600M1 8.500h2.600M1 11h2.600M1 13.500h2.600M1 16h2.600M1 18.500h2.600M1 21h2.600M1 23.500h2.600" stroke="#f4f6fc" stroke-width="1.1"/><path d="M12 7l4 7.200h-8z" fill="#f2d43a" stroke="#c8a81e" stroke-width=".8" stroke-linejoin="round"/><rect x="11.500" y="9.300" width="1.100" height="2.600" fill="#1a1a1a"/><rect x="11.500" y="12.400" width="1.100" height="1" fill="#1a1a1a"/><circle cx="10.300" cy="20.400" r="4" fill="#c8323c" stroke="#a0202a" stroke-width=".6"/><path d="M8.300 18.400l4 4M12.300 18.400l-4 4" stroke="#fff" stroke-width="1.500"/></svg>
<svg style="left:340px;top:735px" width="31" height="28"><defs><linearGradient id="gnp" x1=".7" y1="0" x2=".2" y2="1"><stop offset="0" stop-color="#f4fbfd"/><stop offset=".3" stop-color="#b4dce8"/><stop offset="1" stop-color="#3f9cba"/></linearGradient></defs><path d="M27.200 3l2.800 19.500l-7.500 4.500z" fill="#b09a70"/><path d="M26.600 2.800l2.300 19.400l-7.200 4.600l-4.200 -2.800z" fill="#f2f3f2" stroke="#d4d6d4" stroke-width=".5"/><path d="M10.200 1l16.600 1.800l-9.200 21.400l-17 -5.600z" fill="url(#gnp)" stroke="#e8f4f8" stroke-width=".7"/><path d="M11 .8l15.500 1.700" stroke="#5c6468" stroke-width="1.600" stroke-dasharray="1.200 1"/></svg>
<svg style="left:403px;top:732px" width="32" height="32"><defs><linearGradient id="gcy" x1="0" y1="0" x2="1" y2="0"><stop offset="0" stop-color="#e8b830"/><stop offset=".35" stop-color="#fbe070"/><stop offset="1" stop-color="#d49018"/></linearGradient></defs><path d="M0.400 2v10q0 1.800 4.600 1.800t4.600 -1.800v-10z" fill="url(#gcy)" stroke="#b88a20" stroke-width=".6"/><ellipse cx="5" cy="2" rx="4.600" ry="1.700" fill="#fff0a8" stroke="#d8b040" stroke-width=".5"/><rect x="14.2" y="1.2" width="1.600" height="1.600" fill="#1e8a68"/><rect x="17.2" y="1.2" width="1.600" height="1.600" fill="#1e8a68"/><rect x="20.2" y="1.2" width="1.600" height="1.600" fill="#1e8a68"/><rect x="23.2" y="1.2" width="1.600" height="1.600" fill="#1e8a68"/><rect x="23.2" y="4.2" width="1.600" height="1.600" fill="#1e8a68"/><rect x="23.2" y="7.2" width="1.600" height="1.600" fill="#1e8a68"/><rect x="23.2" y="10.2" width="1.600" height="1.600" fill="#1e8a68"/><rect x="0.2" y="18.2" width="1.600" height="1.600" fill="#1e8a68"/><rect x="0.2" y="21.2" width="1.600" height="1.600" fill="#1e8a68"/><rect x="0.2" y="24.2" width="1.600" height="1.600" fill="#1e8a68"/><rect x="3.2" y="24.2" width="1.600" height="1.600" fill="#1e8a68"/><rect x="6.2" y="24.2" width="1.600" height="1.600" fill="#1e8a68"/><rect x="9.2" y="24.2" width="1.600" height="1.600" fill="#1e8a68"/><path d="M12.500 30.500l10.500 -10.500" stroke="#c89a48" stroke-width="2.200" stroke-linecap="round"/><path d="M12.500 30.500l10.500 -10.500" stroke="#7a5a20" stroke-width=".5" transform="translate(.9,.9)"/><path d="M17.500 14.800q4 -2.500 7.500 -.5l5.800 6.500l-2 2l-2.200 -2.300q-2 .8 -3.600 -1q-1 -2.400 -5.500 -4.700z" fill="#c4ccd8" stroke="#5a6678" stroke-width=".7"/><path d="M11.500 17l13 13" stroke="#4a5668" stroke-width="3.200" stroke-linecap="round"/><path d="M11.500 17l13 13" stroke="#eef2f6" stroke-width="1.800" stroke-linecap="round"/><path d="M9.800 16.500q.5 -2.500 3 -3l-.6 2.600l1.800 1.200l2 -1.600q.5 2.500 -1.800 3.800q-2.600 .6 -4.400 -3z" fill="#dfe4ea" stroke="#5a6678" stroke-width=".7"/></svg>
<svg style="left:461px;top:736px" width="32" height="28"><defs><linearGradient id="gcp" x1="0" y1="0" x2="1" y2="1"><stop offset="0" stop-color="#5eaade"/><stop offset="1" stop-color="#2470bc"/></linearGradient><radialGradient id="gms" cx=".4" cy=".3" r=".8"><stop offset="0" stop-color="#fff"/><stop offset="1" stop-color="#c4c0c8"/></radialGradient></defs><rect x="0.500" y="0.500" width="31" height="21" rx="1.500" fill="url(#gcp)" stroke="#2c72b4"/><rect x="1.500" y="1.500" width="29" height="19" rx="1" fill="none" stroke="#8cc6ee" stroke-width=".6"/><circle cx="8.600" cy="8" r="4.300" fill="none" stroke="#f4fbff" stroke-width="1.100"/><circle cx="10.600" cy="5.600" r="2.500" fill="#f0a830"/><rect x="17.500" y="5.200" width="10.500" height="3.600" fill="#2a8cc0" stroke="#e8f6ff" stroke-width=".9"/><rect x="23.500" y="5.800" width="4" height="2.400" fill="#165a98"/><rect x="17.500" y="11.200" width="10.500" height="3.600" fill="#2a8cc0" stroke="#e8f6ff" stroke-width=".9"/><rect x="22.500" y="11.800" width="5" height="2.400" fill="#165a98"/><circle cx="6.500" cy="16.500" r="1" fill="#d8f0ff"/><circle cx="10.500" cy="16.500" r="1.200" fill="#f6e8b0"/><path d="M9.500 24.500q0 -6 6.300 -6t6.300 6q-6.300 3.500 -12.600 0z" fill="url(#gms)" stroke="#b4b0bc" stroke-width=".5"/></svg>
<svg style="left:526px;top:732px" width="32" height="31"><defs><linearGradient id="gtb" x1="0" y1="0" x2="0" y2="1"><stop offset="0" stop-color="#9cb0c2"/><stop offset="1" stop-color="#7690a8"/></linearGradient></defs><rect x="0.5" y="2" width="5" height="16" fill="#b4bcc4"/><rect x="5.5" y="3" width="2.400" height="15" fill="#8c98a4"/><rect x="0.9" y="3" width="4.2" height="2.200" fill="#fbfcfd"/><rect x="1.9" y="2.2" width="2" height="1" fill="#3a4450"/><rect x="0.9" y="7" width="4.2" height="1" fill="#e4e8ec"/><rect x="0.9" y="9" width="4.2" height="1" fill="#dce0e6"/><rect x="7.5" y="0.3" width="5" height="14" fill="#b4bcc4"/><rect x="12.5" y="1.3" width="2.400" height="13" fill="#8c98a4"/><rect x="7.9" y="1.3" width="4.2" height="2.200" fill="#fbfcfd"/><rect x="8.9" y="0.5" width="2" height="1" fill="#3a4450"/><rect x="7.9" y="5.3" width="4.2" height="1" fill="#e4e8ec"/><rect x="7.9" y="7.3" width="4.2" height="1" fill="#dce0e6"/><rect x="14.5" y="3.5" width="5.5" height="14" fill="#b4bcc4"/><rect x="20.0" y="4.5" width="2.400" height="13" fill="#8c98a4"/><rect x="14.9" y="4.5" width="4.7" height="2.200" fill="#fbfcfd"/><rect x="15.9" y="3.7" width="2" height="1" fill="#3a4450"/><rect x="14.9" y="8.5" width="4.7" height="1" fill="#e4e8ec"/><rect x="14.9" y="10.5" width="4.7" height="1" fill="#dce0e6"/><rect x="5" y="8.5" width="5" height="18" fill="#b4bcc4"/><rect x="10" y="9.5" width="2.400" height="17" fill="#8c98a4"/><rect x="5.4" y="9.5" width="4.2" height="2.200" fill="#fbfcfd"/><rect x="6.4" y="8.7" width="2" height="1" fill="#3a4450"/><rect x="5.4" y="13.5" width="4.2" height="1" fill="#e4e8ec"/><rect x="5.4" y="15.5" width="4.2" height="1" fill="#dce0e6"/><rect x="10.5" y="10" width="5" height="12" fill="#b4bcc4"/><rect x="15.5" y="11" width="2.400" height="11" fill="#8c98a4"/><rect x="10.9" y="11" width="4.2" height="2.200" fill="#fbfcfd"/><rect x="11.9" y="10.2" width="2" height="1" fill="#3a4450"/><rect x="10.9" y="15" width="4.2" height="1" fill="#e4e8ec"/><rect x="10.9" y="17" width="4.2" height="1" fill="#dce0e6"/><path d="M16 16.500q4.500 -5 9.500 1" fill="none" stroke="#1c2630" stroke-width="1.500"/><path d="M8.500 16l5 -1.500l17.500 4.500v9l-4.500 2.500l-18 -5z" fill="url(#gtb)" stroke="#6a8298" stroke-width=".6"/><path d="M26.500 21.500l4.500 -2.500v9l-4.500 2.500z" fill="#a4b6c6"/><path d="M8.500 19.500l18 5" stroke="#b8c8d6" stroke-width=".8"/><ellipse cx="12.800" cy="19.800" rx="1" ry="1.700" fill="#e8eef2" stroke="#3c4a58" stroke-width=".6"/><ellipse cx="21.500" cy="22.200" rx="1" ry="1.700" fill="#e8eef2" stroke="#3c4a58" stroke-width=".6"/></svg>
<svg style="left:1189px;top:746px" width="8" height="5"><path d="M0 4.500L4 0L8 4.500z" fill="#0a0a14"/></svg>
<svg style="left:1208px;top:740px" width="18" height="17"><rect x="1.300" y="0.600" width="2.400" height="15" fill="#f6fcff" stroke="#1f4e6a" stroke-width=".8"/><path d="M3.700 1.300q3.500 -1 6.300 .6v2.400q3 -.3 6.300 -.3v5.600q-3.500 .3 -6.300 0v-1q-3 .6 -6.300 .2z" fill="#f6fcff" stroke="#1f4e6a" stroke-width=".8"/><circle cx="11.9" cy="11.3" r="4.200" fill="#d0362e"/><circle cx="11.9" cy="11.3" r="3.300" fill="#e0564a"/><path d="M10.1 9.5l3.600 3.600M13.700000000000001 9.5l-3.600 3.600" stroke="#fff" stroke-width="1.500"/></svg>
<svg style="left:1233px;top:740px" width="17" height="16"><path d="M3.500 7.500v7h3.500" fill="none" stroke="#1f4e6a" stroke-width="3"/><path d="M3.500 7.500v7h3.500" fill="none" stroke="#f6fcff" stroke-width="1.500"/><rect x="6" y="1.500" width="9.500" height="9.200" fill="#f6fcff" stroke="#1f4e6a" stroke-width=".8"/><rect x="7.800" y="3.300" width="5.900" height="5.600" fill="#5fc0e4" stroke="#1f4e6a" stroke-width=".6"/><path d="M9 10.700h3.500v2h2v2h-8v-2h2.500z" fill="#f6fcff" stroke="#1f4e6a" stroke-width=".8"/><rect x="1" y="0.500" width="5" height="7.300" rx="1.800" fill="#f6fcff" stroke="#1f4e6a" stroke-width=".8"/><rect x="2.800" y="2.400" width="1.400" height="2.800" rx=".6" fill="#5fc0e4" stroke="#1f4e6a" stroke-width=".6"/></svg>
<svg style="left:1257px;top:740px" width="18" height="17"><path d="M0.800 4.800h2.300l4.400 -4.200v15l-4.400 -4.200h-2.300z" fill="#f6fcff" stroke="#1f4e6a" stroke-width=".8" stroke-linejoin="round"/><path d="M3.300 4.800v6.600" stroke="#1f4e6a" stroke-width=".6"/><circle cx="10.9" cy="11.3" r="4.200" fill="#d0362e"/><circle cx="10.9" cy="11.3" r="3.300" fill="#e0564a"/><path d="M9.1 9.5l3.600 3.600M12.700000000000001 9.5l-3.600 3.600" stroke="#fff" stroke-width="1.500"/></svg>
<div class="x" style="left:601.8px;top:4px;font-size:15px;line-height:15px;letter-spacing:-0.267px;">Failover Cluster Manager</div>
<div class="x" style="left:10.6px;top:28px;font-size:12px;line-height:12px;letter-spacing:-0.486px;">File</div>
<div class="x" style="left:44.4px;top:28px;font-size:12px;line-height:12px;letter-spacing:0.123px;">Action</div>
<div class="x" style="left:95.6px;top:28px;font-size:12px;line-height:12px;letter-spacing:-0.349px;">View</div>
<div class="x" style="left:136.5px;top:28px;font-size:12px;line-height:12px;letter-spacing:-0.147px;">Help</div>
<div class="x" style="left:26.7px;top:80px;font-size:12px;line-height:12px;letter-spacing:-0.197px;">Failover Cluster Manager</div>
<div class="x" style="left:64.5px;top:116px;font-size:12px;line-height:12px;letter-spacing:-0.598px;">Roles</div>
<div class="x" style="left:64.5px;top:134px;font-size:12px;line-height:12px;letter-spacing:-0.278px;">Nodes</div>
<div class="x" style="left:64.5px;top:152px;font-size:12px;line-height:12px;letter-spacing:-0.347px;">Storage</div>
<div class="x" style="left:64.5px;top:170px;font-size:12px;line-height:12px;letter-spacing:-0.127px;">Networks</div>
<div class="x" style="left:83.6px;top:188px;font-size:12px;line-height:12px;letter-spacing:-0.193px;">Cluster Network 1</div>
<div class="x" style="left:83.6px;top:206px;font-size:12px;line-height:12px;letter-spacing:-0.151px;">Cluster Network 2</div>
<div class="x" style="left:83.6px;top:224px;font-size:12px;line-height:12px;letter-spacing:-0.151px;">Cluster Network 3</div>
<div class="x" style="left:64.5px;top:242px;font-size:12px;line-height:12px;letter-spacing:-0.352px;">Cluster Events</div>
<div class="x" style="left:208.0px;top:84px;font-size:14px;line-height:14px;font-weight:700;color:#fff;letter-spacing:0.027px;">Cluster Network 3</div>
<div class="x" style="left:252.0px;top:122px;font-size:15px;line-height:15px;font-weight:700;color:#0606b0;letter-spacing:-0.032px;">Summary of Cluster Network 3</div>
<div class="x" style="left:250.0px;top:149px;font-size:11px;line-height:11px;letter-spacing:-0.216px;">Cluster Network 3 has 1 subnet(s).</div>
<div class="x" style="left:216.2px;top:172px;font-size:12px;line-height:12px;font-weight:700;letter-spacing:-0.382px;">Status:</div>
<div class="x" style="left:261.5px;top:172px;font-size:12px;line-height:12px;letter-spacing:-0.672px;">Up</div>
<div class="x" style="left:216.2px;top:188px;font-size:12px;line-height:12px;font-weight:700;letter-spacing:-0.399px;">Cluster Use:</div>
<div class="x" style="left:289.3px;top:188px;font-size:12px;line-height:12px;letter-spacing:-0.054px;">Internal</div>
<div class="x" style="left:662.8px;top:166px;font-size:12px;line-height:12px;font-weight:700;letter-spacing:-0.343px;">Subnets:</div>
<div class="x" style="left:662.8px;top:183px;font-size:11px;line-height:11px;letter-spacing:-0.086px;">172.16.35.0/24 (IPv4)</div>
<div class="x" style="left:217.6px;top:284px;font-size:11px;line-height:11px;letter-spacing:-0.761px;">Name</div>
<div class="x" style="left:504.2px;top:284px;font-size:11px;line-height:11px;letter-spacing:-0.381px;">Status</div>
<div class="x" style="left:790.6px;top:284px;font-size:11px;line-height:11px;letter-spacing:-0.288px;">Current Owner</div>
<div class="x" style="left:223.4px;top:301px;font-size:12px;line-height:12px;color:#1e3c8c;letter-spacing:0.007px;">Network Connections</div>
<div class="x" style="left:256.3px;top:323px;font-size:12px;line-height:12px;letter-spacing:-0.347px;">SQL1</div>
<div class="x" style="left:325.4px;top:322px;font-size:11px;line-height:11px;letter-spacing:-0.378px;">- REPL</div>
<div class="x" style="left:252.3px;top:340px;font-size:11px;line-height:11px;letter-spacing:-0.156px;">Adapter: vmxnet3 Ethernet Adapter #3</div>
<div class="x" style="left:252.3px;top:358px;font-size:11px;line-height:11px;letter-spacing:-0.156px;">IP Address: 172.16.35.10</div>
<div class="x" style="left:261.2px;top:373px;font-size:12px;line-height:12px;letter-spacing:-0.322px;">SQL2</div>
<div class="x" style="left:325.4px;top:376px;font-size:11px;line-height:11px;letter-spacing:-0.378px;">- REPL</div>
<div class="x" style="left:252.3px;top:394px;font-size:11px;line-height:11px;letter-spacing:-0.156px;">Adapter: vmxnet3 Ethernet Adapter #3</div>
<div class="x" style="left:252.3px;top:412px;font-size:11px;line-height:11px;letter-spacing:-0.176px;">IP Address: 172.16.35.11</div>
<div class="x" style="left:518.6px;top:322px;font-size:11px;line-height:11px;letter-spacing:-0.831px;">Up</div>
<div class="x" style="left:518.6px;top:376px;font-size:11px;line-height:11px;letter-spacing:-0.831px;">Up</div>
<div class="x" style="left:789.0px;top:326px;font-size:12px;line-height:12px;letter-spacing:-0.322px;">SQL1</div>
<div class="x" style="left:788.3px;top:367px;font-size:12px;line-height:12px;letter-spacing:-0.322px;">SQL2</div>
<div class="x" style="left:1117.0px;top:82px;font-size:12px;line-height:12px;font-weight:700;letter-spacing:-0.431px;">Actions</div>
<div class="x" style="left:1119.0px;top:106px;font-size:14.5px;line-height:14.5px;color:#0c1c44;letter-spacing:0.069px;">Cluster Network 3</div>
<div class="x" style="left:1143.3px;top:130px;font-size:12px;line-height:12px;letter-spacing:-0.227px;">Show Critical Events</div>
<div class="x" style="left:1143.3px;top:155px;font-size:12px;line-height:12px;letter-spacing:-0.299px;">View</div>
<div class="x" style="left:1143.3px;top:180px;font-size:12px;line-height:12px;letter-spacing:-0.562px;">Refresh</div>
<div class="x" style="left:1143.3px;top:205px;font-size:12px;line-height:12px;letter-spacing:-0.220px;">Properties</div>
<div class="x" style="left:1143.3px;top:230px;font-size:12px;line-height:12px;letter-spacing:-0.172px;">Help</div>
<div class="x" style="left:1295.6px;top:734px;font-size:12px;line-height:12px;color:#0a1a36;letter-spacing:-0.529px;">5:08 PM</div>
<div class="x" style="left:1290.3px;top:751px;font-size:12px;line-height:12px;color:#0a1a36;letter-spacing:-0.243px;">2/19/2017</div>
</body>
</html>
